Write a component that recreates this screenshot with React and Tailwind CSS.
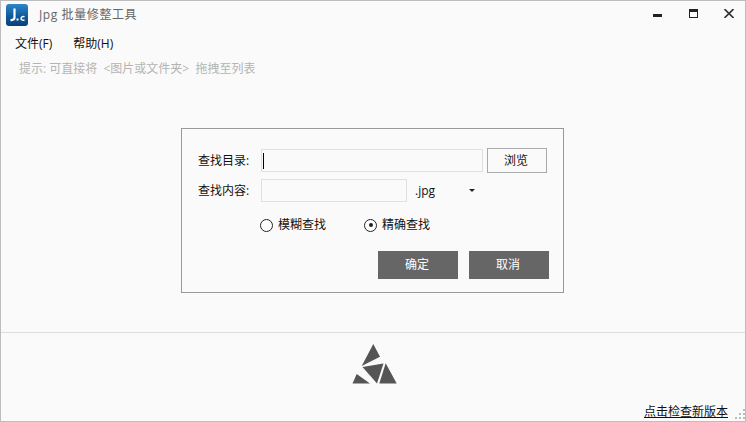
import { useState } from "react";

const font = { fontFamily: '"Open Sans", "Noto Sans CJK SC", sans-serif' };

function AppIcon() {
  return (
    <svg width="22" height="22" viewBox="0 0 22 22">
      <defs>
        <linearGradient id="appIconBg" x1="0" y1="0" x2="0" y2="1">
          <stop offset="0" stopColor="#2f86c8" />
          <stop offset="0.55" stopColor="#0f5a9c" />
          <stop offset="1" stopColor="#0a3f78" />
        </linearGradient>
      </defs>
      <rect width="22" height="22" rx="3" fill="url(#appIconBg)" />
      <path d="M8.500 4.500v9c0 1.800-1.200 2.700-4 2.700" fill="none" stroke="#fff" strokeWidth="2.200" />
      <rect x="10.500" y="14.500" width="2" height="2" fill="#fff" />
      <path d="M18.500 12.700c-2.300-.5-3.400.4-3.400 1.700s1.100 2.200 3.400 1.700" fill="none" stroke="#fff" strokeWidth="1.500" />
    </svg>
  );
}

function WindowButtons() {
  return (
    <div className="mb-[4px] flex items-end">
      <svg width="9" height="3" viewBox="0 0 9 3" className="mb-[1px] mr-[27px]">
        <rect width="9" height="3" fill="#222" />
      </svg>
      <svg width="9" height="9" viewBox="0 0 9 9" className="mr-[26px]">
        <rect x="0.500" y="0.500" width="8" height="8" fill="none" stroke="#222" />
        <rect width="9" height="3" fill="#222" />
      </svg>
      <svg width="10" height="9" viewBox="0 0 10 9" className="mr-[11px]">
        <path d="M0.500 0l9 9M9.500 0l-9 9" stroke="#333" strokeWidth="1.600" />
      </svg>
    </div>
  );
}

function Logo() {
  return (
    <svg width="46" height="40" viewBox="0 0 46 40" fill="#555">
      <path d="M21.300 0L28 12.700 9.700 22z" />
      <path d="M33.700 19.300L44.700 39.500H27.300z" />
      <path d="M10.500 23L31.500 19.500 25 39.500z" />
      <path d="M4.700 30L18 39.500H0.500z" />
    </svg>
  );
}

function ResizeGrip() {
  return (
    <svg width="10" height="10" viewBox="0 0 10 10" fill="#bbb" className="absolute bottom-[2px] right-0">
      <rect x="8" y="0" width="2" height="2" />
      <rect x="4" y="4" width="2" height="2" />
      <rect x="8" y="4" width="2" height="2" />
      <rect x="0" y="8" width="2" height="2" />
      <rect x="4" y="8" width="2" height="2" />
      <rect x="8" y="8" width="2" height="2" />
    </svg>
  );
}

function Radio({ checked, label }) {
  return (
    <label className="flex items-center gap-[5px]">
      <span className="flex h-[13px] w-[13px] items-center justify-center rounded-full border border-[#222] bg-white">
        {checked && <span className="h-1 w-1 rounded-full bg-[#222]" />}
      </span>
      <span className="text-[12px] leading-4 text-[#111]">{label}</span>
    </label>
  );
}

export default function App() {
  const [mode, setMode] = useState("exact");

  return (
    <div
      className="relative flex h-[422px] w-[746px] flex-col border border-[#bdbdbd] bg-[#fafafa] text-[#111]"
      style={font}
    >
      {/* title bar */}
      <div className="flex h-[26px] shrink-0 items-center justify-between pl-[5px] pt-[2px]">
        <div className="flex items-center">
          <AppIcon />
          <span className="ml-[11px] text-[12px] tracking-[0.6px] text-[#666]">Jpg 批量修整工具</span>
        </div>
        <WindowButtons />
      </div>

      {/* menu */}
      <div className="mt-[9px] flex gap-[21px] pl-[14px] text-[12px] leading-4">
        <span>文件(F)</span>
        <span>帮助(H)</span>
      </div>
      <p className="mt-[9px] whitespace-pre pl-[18px] text-[12px] leading-4 text-[#b4b4b4]">
        {"提示: 可直接将  <图片或文件夹>  拖拽至列表"}
      </p>

      {/* search dialog */}
      <div className="ml-[180px] mt-[51px] h-[165px] w-[383px] border border-[#999] px-[16px] pt-[19px]">
        <div className="flex items-center">
          <span className="w-[63px] text-[12px] leading-4">查找目录:</span>
          <div className="flex h-[23px] w-[222px] items-center border border-[#e0e0e0] pl-[1px]">
            <span className="h-[16px] w-px bg-black" />
          </div>
          <button className="ml-[4px] h-[25px] w-[60px] border border-[#aaa] pr-[2px] text-[12px]">浏览</button>
        </div>

        <div className="mt-[6px] flex items-center">
          <span className="w-[63px] text-[12px] leading-4">查找内容:</span>
          <div className="h-[23px] w-[146px] border border-[#e0e0e0]" />
          <span className="ml-[8px] w-[54px] text-[12px] leading-4">.jpg</span>
          <span className="h-0 w-0 border-x-[3px] border-t-[3px] border-x-transparent border-t-[#222]" />
        </div>

        <div className="ml-[62px] mt-[15px] flex gap-[38px]">
          <div onClick={() => setMode("fuzzy")}>
            <Radio checked={mode === "fuzzy"} label="模糊查找" />
          </div>
          <div onClick={() => setMode("exact")}>
            <Radio checked={mode === "exact"} label="精确查找" />
          </div>
        </div>

        <div className="mr-[-2px] mt-[18px] flex justify-end gap-[11px]">
          <button className="h-[28px] w-[80px] bg-[#666] pr-[2px] text-[12px] text-white">确定</button>
          <button className="h-[28px] w-[80px] bg-[#666] pr-[2px] text-[12px] text-white">取消</button>
        </div>
      </div>

      {/* footer */}
      <div className="mt-[39px] flex flex-1 flex-col border-t border-[#ddd]">
        <div className="mt-[11px] flex justify-center pl-[3px]">
          <Logo />
        </div>
        <div className="mt-auto flex justify-end pb-[1px] pr-[17px]">
          <a className="text-[12px] leading-4 text-[#111] underline">点击检查新版本</a>
        </div>
      </div>
      <ResizeGrip />
    </div>
  );
}
